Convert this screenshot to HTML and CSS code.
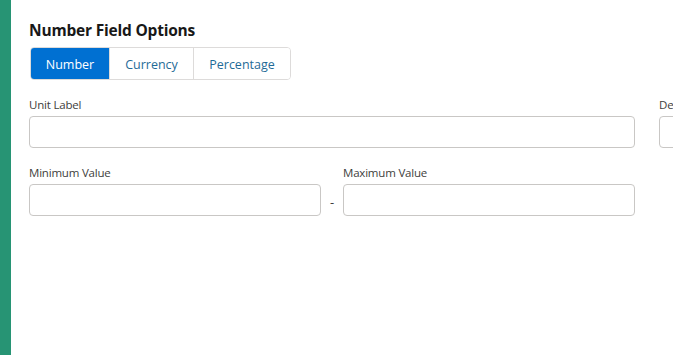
FILE: index.html
```html
<!DOCTYPE html>
<html lang="en">
<head>
    <meta charset="UTF-8">
    <meta name="viewport" content="width=device-width, initial-scale=1.0">
    <title>Number Field Options</title>
    <link rel="stylesheet" href="styles.css">
</head>
<body>
    <div class="page">
        <div class="rail"></div>
        <div class="main">
            <h2 class="title">Number Field Options</h2>
            <div class="tabs">
                <button class="tab active">Number</button>
                <button class="tab">Currency</button>
                <button class="tab">Percentage</button>
            </div>

            <div class="row-top">
                <div class="field">
                    <label class="label">Unit Label</label>
                    <input class="input" type="text">
                </div>
                <div class="field">
                    <label class="label">Decimal Places</label>
                    <input class="input" type="text">
                </div>
            </div>

            <div class="row-range">
                <div class="field">
                    <label class="label">Minimum Value</label>
                    <input class="input" type="text">
                </div>
                <div class="dash">-</div>
                <div class="field">
                    <label class="label">Maximum Value</label>
                    <input class="input" type="text">
                </div>
            </div>
        </div>
    </div>
</body>
</html>
```

FILE: styles.css
```css
body {
    margin: 0;
    background-color: white;
    font-family: "Open Sans", "Noto Sans", sans-serif;
    overflow: hidden;
}

.page {
    display: flex;
    height: 355px;
}

.rail {
    width: 11px;
    flex-shrink: 0;
    background-color: #279474;
}

.main {
    flex-shrink: 0;
    width: 800px;
    padding: 20px 0 0 18px;
}

.title {
    margin: 0;
    font-size: 15.5px;
    line-height: 20px;
    font-weight: 700;
    color: #181818;
    letter-spacing: -0.2px;
}

.tabs {
    display: inline-flex;
    margin-top: 7px;
    margin-left: 1px;
    border: 1px solid #dddbda;
    border-radius: 4px;
    overflow: hidden;
    height: 33px;
    box-sizing: border-box;
}

.tab {
    font-family: inherit;
    font-size: 12.5px;
    border: none;
    border-left: 1px solid #dddbda;
    background: white;
    color: #1f6b97;
    padding: 1px 0 0;
    height: 100%;
    width: 84px;
}

.tab:first-child {
    border-left: none;
}

.tab:last-child {
    width: 97px;
}

.tab.active {
    background-color: #0070d2;
    color: white;
    width: 78px;
}

.row-top {
    display: grid;
    grid-template-columns: 606px 200px;
    gap: 24px;
    margin-top: 17px;
}

.row-range {
    display: grid;
    grid-template-columns: 292px 22px 292px;
    margin-top: 17px;
}

.field {
    display: flex;
    flex-direction: column;
}

.label {
    font-size: 11.5px;
    line-height: 16px;
    color: #3e3e3c;
    margin-bottom: 3px;
    letter-spacing: -0.2px;
}

.input {
    height: 32px;
    box-sizing: border-box;
    border: 1px solid #c9c7c5;
    border-radius: 4px;
    background: white;
    margin: 0;
}

.dash {
    align-self: end;
    text-align: center;
    height: 32px;
    line-height: 36px;
    font-size: 13px;
    color: #3e3e3c;
}
```
